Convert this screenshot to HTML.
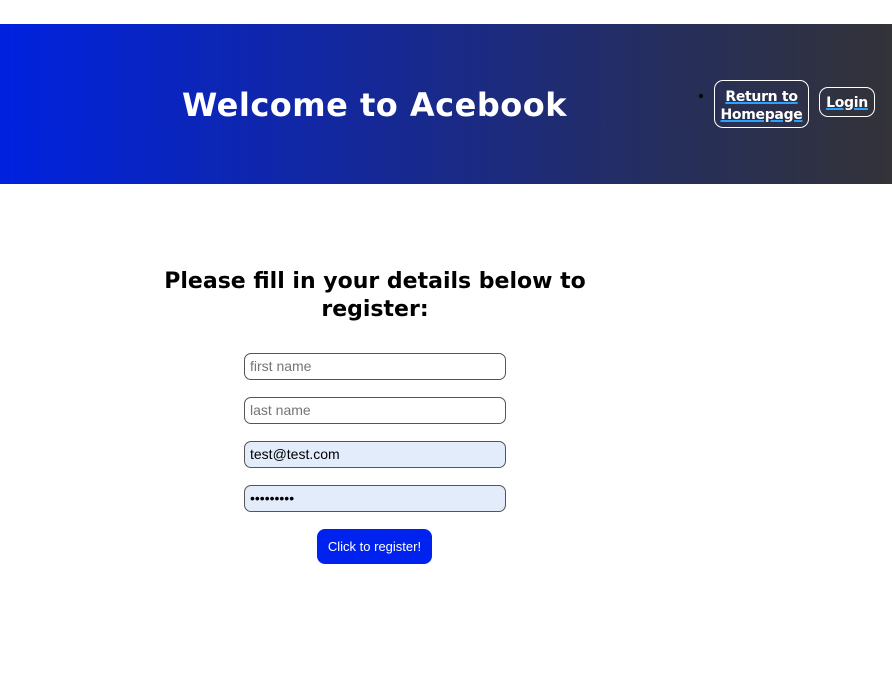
<!DOCTYPE html>
<html><head><meta charset="utf-8">
<style>
*{margin:0;padding:0;box-sizing:border-box}
body{width:892px;height:680px;background:#fff;font-family:"DejaVu Sans","Liberation Sans",sans-serif;position:relative;overflow:hidden}
.hdr{position:absolute;left:0;top:24px;width:892px;height:160px;background:linear-gradient(90deg,#0022e0 0%,#14289a 40%,#262e5c 75%,#333338 100%)}
.title{position:absolute;left:182px;top:86px;color:#fff;font-weight:bold;font-size:32px;letter-spacing:0.5px;white-space:nowrap}
.btn{position:absolute;border:1.5px solid #fff;border-radius:9px;color:#fff;font-weight:bold;font-size:14px;text-align:center;line-height:18px;letter-spacing:-0.3px}
.btn span{text-decoration:underline;text-decoration-color:#29a3ff;text-decoration-thickness:2px}
.dot{position:absolute;left:699px;top:94px;width:4px;height:4px;border-radius:50%;background:#000}
h2{position:absolute;left:160px;width:430px;top:268px;text-align:center;font-size:22px;font-weight:bold;line-height:28px;color:#000}
.in{position:absolute;left:244px;width:262px;height:27px;border:1px solid #555;border-radius:7px;font-family:"Liberation Sans",sans-serif;font-size:14px;padding-left:5px;line-height:25px;color:#757575}
.fill{background:#e3ecfb;color:#000}
.sub{position:absolute;left:317px;top:529px;width:115px;height:35px;background:#0022ee;border-radius:8px;color:#fff;font-family:"Liberation Sans",sans-serif;font-size:13px;text-align:center;line-height:35px}
</style></head><body>
<div class="hdr"></div>
<div class="title">Welcome to Acebook</div>
<div class="dot"></div>
<div class="btn" style="left:714px;top:80px;width:95px;height:48px;padding-top:7px"><span>Return to</span><br><span>Homepage</span></div>
<div class="btn" style="left:819px;top:87px;width:56px;height:30px;line-height:31px"><span>Login</span></div>
<h2>Please fill in your details below to register:</h2>
<div class="in" style="top:353px">first name</div>
<div class="in" style="top:397px">last name</div>
<div class="in fill" style="top:441px">test@test.com</div>
<div class="in fill" style="top:485px;font-size:14px;letter-spacing:0">•••••••••</div>
<div class="sub">Click to register!</div>
</body></html>
